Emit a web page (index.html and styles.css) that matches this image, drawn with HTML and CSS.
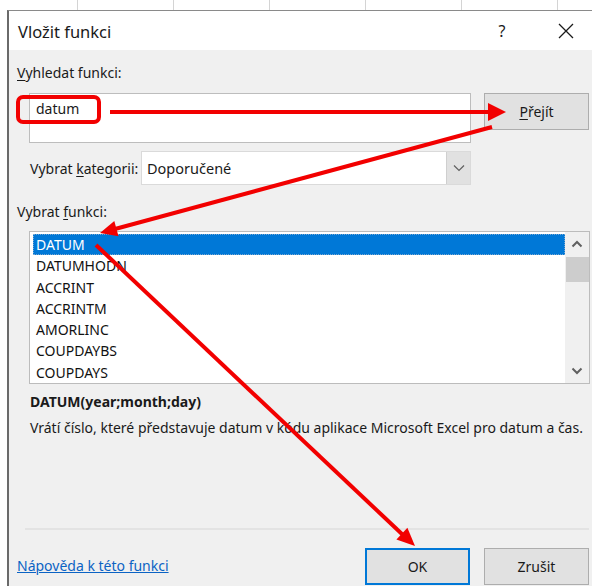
FILE: index.html
```html
<!DOCTYPE html>
<html lang="cs">
<head>
<meta charset="utf-8">
<title>Vložit funkci</title>
<link rel="stylesheet" href="styles.css">
</head>
<body>
<div class="sheet-strip"></div>
<div class="dialog">
  <div class="titlebar">
    <span class="title">Vložit funkci</span>
    <span class="help">?</span>
    <span class="close">
      <svg width="16" height="16" viewBox="0 0 16 16"><path d="M1 1 L15 15 M15 1 L1 15" stroke="#1a1a1a" stroke-width="1.3" fill="none"/></svg>
    </span>
  </div>
  <div class="content">
    <div class="label top-label"><u>V</u>yhledat funkci:</div>
    <div class="search-row">
      <div class="search-box">datum</div>
      <button class="btn go"><u>P</u>řejít</button>
    </div>
    <div class="category-row">
      <span class="label">Vybrat <u>k</u>ategorii:</span>
      <div class="select">
        <span class="select-value">Doporučené</span>
        <span class="select-btn">
          <svg width="12" height="8" viewBox="0 0 12 8"><path d="M1 1.5 L6 6.5 L11 1.5" stroke="#606060" stroke-width="1.2" fill="none"/></svg>
        </span>
      </div>
    </div>
    <div class="label list-label">Vybrat <u>f</u>unkci:</div>
    <div class="listbox">
      <ul class="items">
        <li class="item selected">DATUM</li>
        <li class="item">DATUMHODN</li>
        <li class="item">ACCRINT</li>
        <li class="item">ACCRINTM</li>
        <li class="item">AMORLINC</li>
        <li class="item">COUPDAYBS</li>
        <li class="item">COUPDAYS</li>
      </ul>
      <div class="scrollbar">
        <span class="arrow">
          <svg width="12" height="8" viewBox="0 0 12 8"><path d="M1.5 6.5 L6 2 L10.5 6.5" stroke="#606060" stroke-width="2" fill="none"/></svg>
        </span>
        <span class="thumb"></span>
        <span class="track"></span>
        <span class="arrow">
          <svg width="12" height="8" viewBox="0 0 12 8"><path d="M1.5 1.5 L6 6 L10.5 1.5" stroke="#606060" stroke-width="2" fill="none"/></svg>
        </span>
      </div>
    </div>
    <div class="signature">DATUM(year;month;day)</div>
    <div class="description">Vrátí číslo, které představuje datum v kódu aplikace Microsoft Excel pro datum a čas.</div>
    <div class="separator"></div>
    <div class="footer">
      <a class="help-link" href="#">Nápověda k této funkci</a>
      <div class="actions">
        <button class="btn ok">OK</button>
        <button class="btn">Zrušit</button>
      </div>
    </div>
  </div>
</div>
<svg class="marks" width="592" height="586" viewBox="0 0 592 586">
  <g fill="none" stroke="#f20000" stroke-width="4">
    <rect x="18" y="97" width="81" height="25" rx="5"/>
    <line x1="110" y1="112" x2="490" y2="112"/>
    <line x1="492" y1="127" x2="115" y2="229"/>
    <line x1="96" y1="245" x2="403" y2="535"/>
  </g>
  <g fill="#f20000">
    <polygon points="488,103 506,112 488,121"/>
    <polygon points="100,233 118.5,236.3 114.3,220.9"/>
    <polygon points="415,546 396.4,539.4 407.4,527.8"/>
  </g>
</svg>
</body>
</html>
```
FILE: styles.css
```css
* { box-sizing: border-box; }

html, body {
  margin: 0;
  padding: 0;
  width: 592px;
  height: 586px;
  overflow: hidden;
  background: #ffffff;
  font-family: "Noto Sans", "Open Sans", sans-serif;
  color: #1a1a1a;
}

/* worksheet grid peeking above the dialog */
.sheet-strip {
  height: 10px;
  background-color: #ffffff;
  background-image: repeating-linear-gradient(to right, transparent 0 77px, #d4d4d4 77px 78px, transparent 78px 96px);
  background-size: 96px 10px;
  background-position: 0 0;
}

.dialog {
  margin-left: 7px;
  height: 576px;
  border-top: 1px solid #8a8a8a;
  border-left: 2px solid #6a6a6a;
  background: #f0f0f0;
  display: flex;
  flex-direction: column;
}

.titlebar {
  height: 39px;
  background: #ffffff;
  display: flex;
  align-items: center;
  padding-left: 9px;
}

.title {
  font-size: 16.5px;
  flex: 1;
  padding-top: 1px;
}

.help {
  font-size: 16px;
  width: 20px;
  text-align: center;
  margin-right: 46px;
}

.close {
  width: 16px;
  height: 16px;
  margin-right: 18px;
  display: flex;
}

.content {
  flex: 1;
  padding: 0 3px 0 8px;
  display: flex;
  flex-direction: column;
  font-size: 14px;
}

.label {
  font-size: 14px;
  white-space: nowrap;
}

.label u, .btn u { text-decoration-thickness: 1px; text-underline-offset: 2px; }

.top-label {
  height: 43px;
  padding-top: 13px;
}

.search-row {
  display: flex;
  justify-content: space-between;
  padding-left: 12px;
  height: 58px;
}

.search-box {
  width: 442px;
  height: 50px;
  background: #ffffff;
  border: 1px solid #bdbdbd;
  padding: 5px 0 0 6px;
  font-size: 14px;
}

.btn {
  font-family: inherit;
  font-size: 14px;
  color: #1a1a1a;
  background: #e1e1e1;
  border: 1px solid #adadad;
  width: 105px;
  height: 37px;
  padding: 0;
}

.category-row {
  display: flex;
  align-items: center;
  height: 34px;
  padding-left: 13px;
}

.category-row .label {
  width: 111px;
}

.select {
  width: 330px;
  height: 34px;
  background: #ffffff;
  border: 1px solid #dadada;
  display: flex;
  align-items: center;
}

.select-value {
  flex: 1;
  padding-left: 5px;
  font-size: 14.5px;
}

.select-btn {
  width: 24px;
  height: 32px;
  background: #e1e1e1;
  border-left: 1px solid #cfcfcf;
  display: flex;
  align-items: center;
  justify-content: center;
}

.list-label {
  height: 46px;
  padding-top: 17px;
}

.listbox {
  margin-left: 12px;
  width: 561px;
  height: 153px;
  background: #ffffff;
  border: 1px solid #bcbcbc;
  display: flex;
  padding: 2px 0 1px 3px;
}

.items {
  list-style: none;
  margin: 0;
  padding: 0;
  flex: 1;
}

.item {
  height: 21.3px;
  line-height: 22px;
  padding-left: 3px;
  font-size: 14px;
  color: #111111;
}

.item.selected {
  background: #0078d7;
  color: #ffffff;
  outline: 1px dotted #7aa7d0;
  outline-offset: -1px;
}

.scrollbar {
  width: 24px;
  background: #f0f0f0;
  display: flex;
  flex-direction: column;
  margin-top: -2px;
  margin-bottom: -1px;
}

.scrollbar .arrow {
  height: 24px;
  display: flex;
  align-items: center;
  justify-content: center;
}

.scrollbar .thumb {
  height: 25px;
  background: #cdcdcd;
  margin: 1px 0 0 1px;
}

.scrollbar .track { flex: 1; }

.signature {
  font-weight: bold;
  font-size: 14px;
  padding: 8px 0 0 13px;
  height: 34px;
}

.description {
  font-size: 14px;
  padding-left: 13px;
  height: 110px;
}

.separator {
  height: 2px;
  background: #e3e3e3;
  margin-left: 8px;
}

.footer {
  display: flex;
  align-items: flex-start;
  justify-content: space-between;
  padding-top: 18px;
}

.help-link {
  color: #0b63c4;
  font-size: 14px;
  margin-top: 8px;
  text-decoration-thickness: 1px;
}

.actions {
  display: flex;
  gap: 14px;
}

.btn.ok {
  border: 1px solid #0078d7;
  box-shadow: inset 0 0 0 1px #0078d7;
}

.marks {
  position: absolute;
  left: 0;
  top: 0;
  pointer-events: none;
}
```
